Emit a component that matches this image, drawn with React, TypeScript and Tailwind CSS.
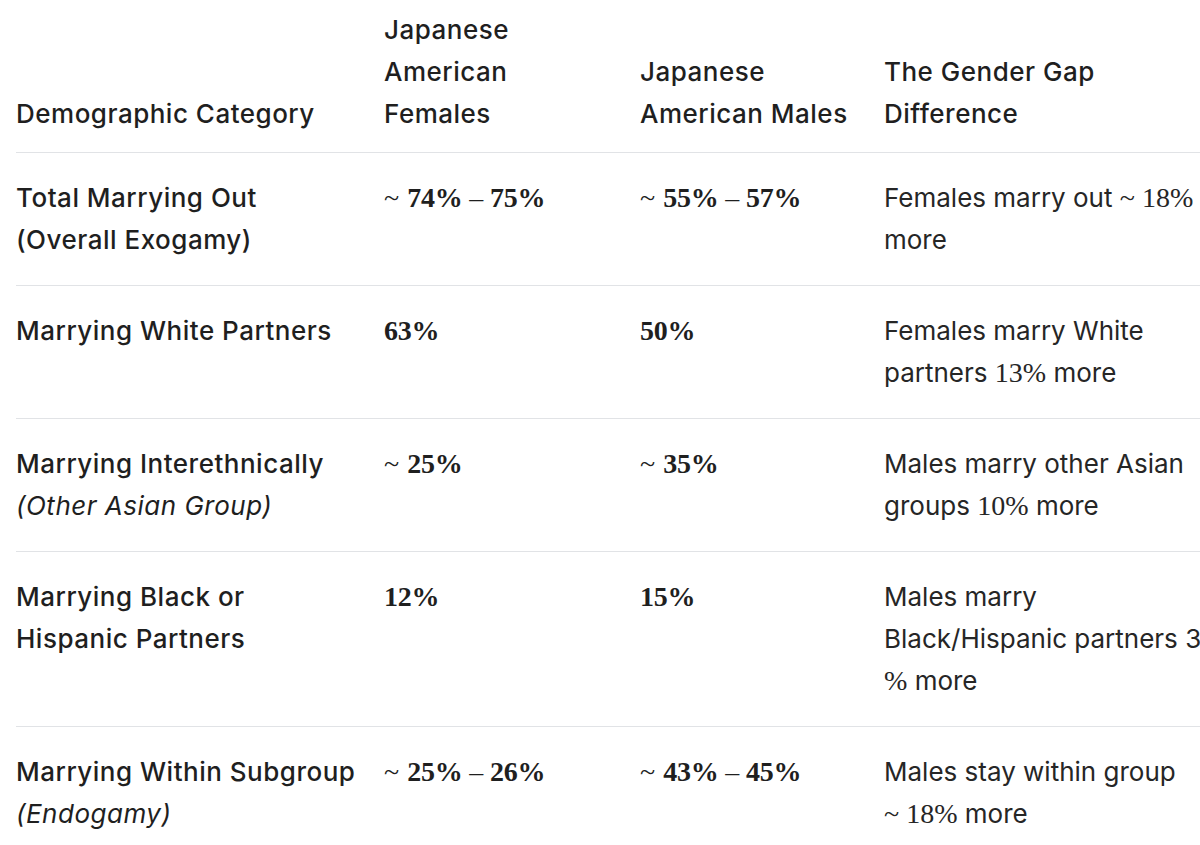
const sans = { fontFamily: "Inter, 'Liberation Sans', sans-serif" };

const Num = ({ children }: { children: React.ReactNode }) => (
  <span className="font-['Liberation_Serif',serif] text-[28px] font-bold tracking-[-0.2px]">{children}</span>
);

const Tilde = () => <span className="font-['Liberation_Serif',serif] text-[28px] font-normal">~&nbsp;</span>;

const Dash = () => <span className="font-normal">&nbsp;–&nbsp;</span>;

const M = ({ children }: { children: React.ReactNode }) => (
  <span className="font-['Liberation_Serif',serif] text-[28px] tracking-normal">{children}</span>
);

const rows = [
  {
    label: (
      <>
        Total Marrying Out
        <br />
        (Overall Exogamy)
      </>
    ),
    female: (
      <>
        <Tilde />
        <Num>
          74%
          <Dash />
          75%
        </Num>
      </>
    ),
    male: (
      <>
        <Tilde />
        <Num>
          55%
          <Dash />
          57%
        </Num>
      </>
    ),
    gap: (
      <>
        Females marry out <M>~&nbsp;18%</M> more
      </>
    ),
  },
  {
    label: <>Marrying White Partners</>,
    female: <Num>63%</Num>,
    male: <Num>50%</Num>,
    gap: (
      <>
        Females marry White partners <M>13%</M> more
      </>
    ),
  },
  {
    label: (
      <>
        Marrying Interethnically
        <br />
        <span className="font-normal italic">(Other Asian Group)</span>
      </>
    ),
    female: (
      <>
        <Tilde />
        <Num>25%</Num>
      </>
    ),
    male: (
      <>
        <Tilde />
        <Num>35%</Num>
      </>
    ),
    gap: (
      <>
        Males marry other Asian groups <M>10%</M> more
      </>
    ),
  },
  {
    label: (
      <>
        Marrying Black or
        <br />
        Hispanic Partners
      </>
    ),
    female: <Num>12%</Num>,
    male: <Num>15%</Num>,
    gap: (
      <>
        Males marry Black/Hispanic partners 3<wbr />
        <M>%</M> more
      </>
    ),
  },
  {
    label: (
      <>
        Marrying Within Subgroup
        <br />
        <span className="font-normal italic">(Endogamy)</span>
      </>
    ),
    female: (
      <>
        <Tilde />
        <Num>
          25%
          <Dash />
          26%
        </Num>
      </>
    ),
    male: (
      <>
        <Tilde />
        <Num>
          43%
          <Dash />
          45%
        </Num>
      </>
    ),
    gap: (
      <>
        Males stay within group <M>~&nbsp;18%</M> more
      </>
    ),
  },
];

export default function App() {
  return (
    <div className="h-[845px] w-full overflow-hidden bg-white pl-4 text-[#1f1f1f]" style={sans}>
      <table className="w-[1204px] table-fixed border-collapse text-left text-[26px] leading-[42px] tracking-[0.5px]">
        <colgroup>
          <col className="w-[368px]" />
          <col className="w-[256px]" />
          <col className="w-[244px]" />
          <col className="w-[336px]" />
        </colgroup>
        <thead>
          <tr className="border-b border-[#e1e3e6]">
            <th className="pt-[9px] pr-4 pb-[17px] align-bottom font-medium">Demographic Category</th>
            <th className="pt-[9px] pr-10 pb-[17px] align-bottom font-medium">Japanese American Females</th>
            <th className="pt-[9px] pr-4 pb-[17px] align-bottom font-medium">Japanese American Males</th>
            <th className="pt-[9px] pr-0 pb-[17px] align-bottom font-medium">The Gender Gap Difference</th>
          </tr>
        </thead>
        <tbody>
          {rows.map((r, i) => (
            <tr key={i} className="border-b border-[#e1e3e6]">
              <td className="py-6 pr-4 align-top font-medium">{r.label}</td>
              <td className="py-6 pr-4 align-top">{r.female}</td>
              <td className="py-6 pr-4 align-top">{r.male}</td>
              <td className="py-6 pr-4 align-top tracking-normal text-[#262626]">{r.gap}</td>
            </tr>
          ))}
        </tbody>
      </table>
    </div>
  );
}
